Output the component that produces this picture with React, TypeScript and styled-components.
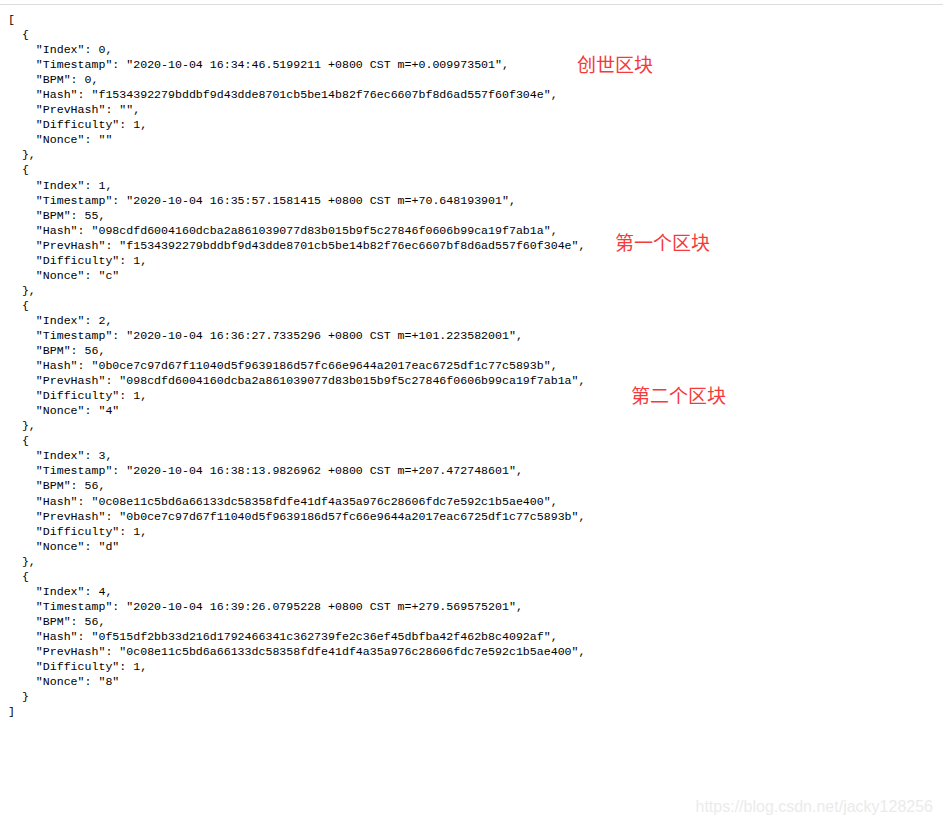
import React from "react";
import styled, { createGlobalStyle } from "styled-components";

const Global = createGlobalStyle`
  html, body { margin: 0; padding: 0; background: #fff; }
  body { width: 943px; height: 824px; overflow: hidden; }
`;

const Page = styled.div`
  position: relative;
  width: 943px;
  height: 824px;
  background: #fff;
  display: flex;
  flex-direction: column;
`;

const TopBar = styled.div`
  height: 4px;
  border-bottom: 1px solid #dadce0;
  flex: none;
`;

const Json = styled.pre`
  margin: 0;
  padding: 7px 0 0 8px;
  font-family: "Liberation Mono", "DejaVu Sans Mono", monospace;
  font-size: 11.6px;
  line-height: 15.05px;
  color: #000;
  white-space: pre;
`;

const Note = styled.div<{ $x: number; $y: number }>`
  position: absolute;
  left: ${(p) => p.$x}px;
  top: ${(p) => p.$y}px;
  font-family: "Noto Sans CJK SC", "Noto Sans", sans-serif;
  font-size: 19px;
  line-height: 22px;
  color: #f43a3a;
  white-space: nowrap;
`;

const Watermark = styled.div`
  position: absolute;
  right: 10px;
  bottom: 8px;
  font-family: "Liberation Sans", Arial, sans-serif;
  font-size: 16px;
  color: #ebebeb;
  white-space: nowrap;
`;

const blocks = [
  {
    Index: 0,
    Timestamp: "2020-10-04 16:34:46.5199211 +0800 CST m=+0.009973501",
    BPM: 0,
    Hash: "f1534392279bddbf9d43dde8701cb5be14b82f76ec6607bf8d6ad557f60f304e",
    PrevHash: "",
    Difficulty: 1,
    Nonce: "",
  },
  {
    Index: 1,
    Timestamp: "2020-10-04 16:35:57.1581415 +0800 CST m=+70.648193901",
    BPM: 55,
    Hash: "098cdfd6004160dcba2a861039077d83b015b9f5c27846f0606b99ca19f7ab1a",
    PrevHash: "f1534392279bddbf9d43dde8701cb5be14b82f76ec6607bf8d6ad557f60f304e",
    Difficulty: 1,
    Nonce: "c",
  },
  {
    Index: 2,
    Timestamp: "2020-10-04 16:36:27.7335296 +0800 CST m=+101.223582001",
    BPM: 56,
    Hash: "0b0ce7c97d67f11040d5f9639186d57fc66e9644a2017eac6725df1c77c5893b",
    PrevHash: "098cdfd6004160dcba2a861039077d83b015b9f5c27846f0606b99ca19f7ab1a",
    Difficulty: 1,
    Nonce: "4",
  },
  {
    Index: 3,
    Timestamp: "2020-10-04 16:38:13.9826962 +0800 CST m=+207.472748601",
    BPM: 56,
    Hash: "0c08e11c5bd6a66133dc58358fdfe41df4a35a976c28606fdc7e592c1b5ae400",
    PrevHash: "0b0ce7c97d67f11040d5f9639186d57fc66e9644a2017eac6725df1c77c5893b",
    Difficulty: 1,
    Nonce: "d",
  },
  {
    Index: 4,
    Timestamp: "2020-10-04 16:39:26.0795228 +0800 CST m=+279.569575201",
    BPM: 56,
    Hash: "0f515df2bb33d216d1792466341c362739fe2c36ef45dbfba42f462b8c4092af",
    PrevHash: "0c08e11c5bd6a66133dc58358fdfe41df4a35a976c28606fdc7e592c1b5ae400",
    Difficulty: 1,
    Nonce: "8",
  },
];

export default function App() {
  return (
    <Page>
      <Global />
      <TopBar />
      <Json>{JSON.stringify(blocks, null, 2)}</Json>
      <Note $x={577} $y={53}>创世区块</Note>
      <Note $x={615} $y={231}>第一个区块</Note>
      <Note $x={631} $y={384}>第二个区块</Note>
      <Watermark>https://blog.csdn.net/jacky128256</Watermark>
    </Page>
  );
}
